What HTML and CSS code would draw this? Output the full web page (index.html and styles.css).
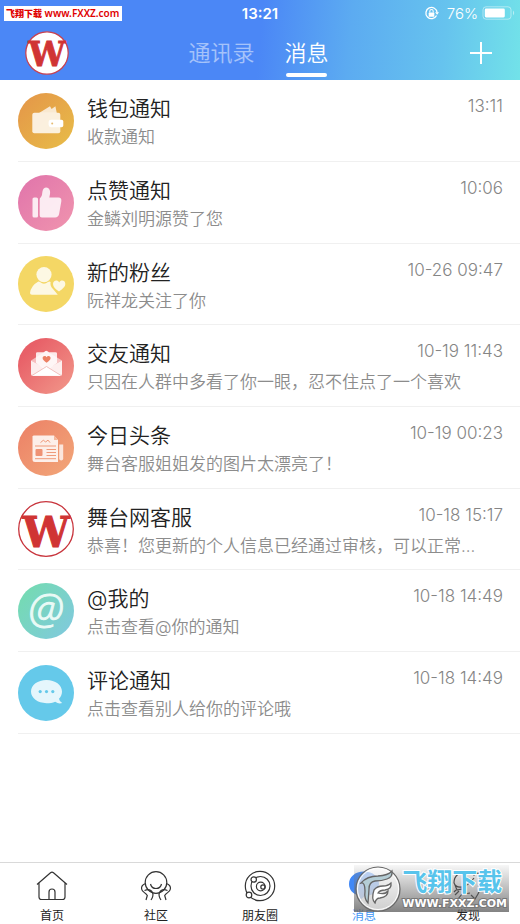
FILE: index.html
```html
<!DOCTYPE html>
<html lang="zh-CN">
<head>
<meta charset="utf-8">
<meta name="viewport" content="width=device-width, initial-scale=1">
<title>消息</title>
<link rel="stylesheet" href="styles.css">
</head>
<body>
<header class="header">
  <div class="status">
    <span class="status-left"><span class="site-tag"><b>飞翔下载</b> www.FXXZ.com</span></span>
    <time class="clock">13:21</time>
    <span class="status-right">
      <svg class="lock" viewBox="0 0 16 16" aria-hidden="true"><path d="M13.4 10.2A6 6 0 1 1 14 7" fill="none" stroke="#fff" stroke-width="1.4"/><path d="M11.8 6.6h4.2l-2 2.8z" fill="#fff"/><rect x="5" y="7" width="6" height="4.4" rx=".6" fill="#fff"/><path d="M6.2 7V5.6a1.8 1.8 0 0 1 3.6 0V7" fill="none" stroke="#fff" stroke-width="1.1"/></svg>
      <span>76%</span>
      <svg class="battery" viewBox="0 0 34 14" aria-hidden="true"><rect x="1" y=".8" width="28" height="12.4" rx="3" fill="none" stroke="#fff" stroke-opacity=".45"/><rect x="2.800" y="2.600" width="20" height="8.800" rx="1.300" fill="#fff"/><path d="M31 4.600q2.400 2.400 0 4.800z" fill="#fff" fill-opacity=".5"/></svg>
    </span>
  </div>
  <div class="nav">
    <a class="avatar" href="#me" aria-label="我"><svg viewBox="0 0 56 56" aria-hidden="true"><circle cx="28" cy="28" r="27" fill="#fff" stroke="#c8404f" stroke-width="1.600"/><text class="mark" x="28" y="45" text-anchor="middle">W</text></svg></a>
    <nav class="switch"><a href="#contacts">通讯录</a><a class="current" href="#messages">消息</a></nav>
    <button class="add" type="button" aria-label="添加"><svg viewBox="0 0 22 22" aria-hidden="true"><path d="M11 0v22M0 11h22" stroke="#fff" stroke-width="2"/></svg></button>
  </div>
</header>

<main class="content">
  <ul class="list">
    <li class="row">
      <svg class="icon" viewBox="0 0 56 56" aria-hidden="true"><defs><linearGradient id="g1" x1="0" y1="0" x2="1" y2="1"><stop stop-color="#e49549"/><stop offset="1" stop-color="#e8bd48"/></linearGradient></defs><circle cx="28" cy="28" r="28" fill="url(#g1)"/><path d="M21 20l11-6.700 1.600 2.700 3.800-2.700 1.400 6.700z" fill="#fff" fill-opacity=".75"/><rect x="14.300" y="19.700" width="28" height="20.500" rx="2" fill="#fff" fill-opacity=".82"/><path d="M33 26.700h10.500a1.800 1.800 0 0 1 1.800 1.800v3.900a1.800 1.800 0 0 1-1.800 1.800H33a2.400 2.400 0 0 1-2.400-2.400v-2.700a2.400 2.400 0 0 1 2.400-2.400z" fill="#fff"/><circle cx="34.200" cy="30.400" r="1" fill="#e6bb72"/></svg>
      <div class="text"><h2>钱包通知</h2><p>收款通知</p></div><time>13:11</time>
    </li>
    <li class="row">
      <svg class="icon" viewBox="0 0 56 56" aria-hidden="true"><defs><linearGradient id="g2" x1="0" y1="0" x2="1" y2="1"><stop stop-color="#e074ab"/><stop offset="1" stop-color="#f094ae"/></linearGradient></defs><circle cx="28" cy="28" r="28" fill="url(#g2)"/><g fill="#fff" fill-opacity=".84"><rect x="14.500" y="22.500" width="5.500" height="20" rx="1.600"/><path d="M21.700 24.500q0-1.500 1.100-2.300c1.500-1.500 1.200-3.500 1.700-6 .4-2.300 1.900-3.700 3.700-3.700 2.900 0 4.500 3 3.800 6.600l-.7 3.500h9q3.700 0 3 3.900l-2.200 12.600q-.7 3.400-4 3.400H23.800q-2.100 0-2.100-2.200z"/></g></svg>
      <div class="text"><h2>点赞通知</h2><p>金鳞刘明源赞了您</p></div><time>10:06</time>
    </li>
    <li class="row">
      <svg class="icon" viewBox="0 0 56 56" aria-hidden="true"><circle cx="28" cy="28" r="28" fill="#f4d765"/><g fill="#fff" fill-opacity=".82"><circle cx="26" cy="18.600" r="7.600"/><path d="M12 37q1-7.500 8-11.300 1-.5 2 .4 4 3.500 8 0 1.200-1 2.600-.2-.8 4 2.400 7.200l4.800 5.600H14q-2 0-2-1.700z"/><path d="M41 35.600c-3.500-2.700-6-4.600-6-7.600 0-3.800 4.600-4.800 6.200-1.500 1.600-3.300 6.100-2.300 6.100 1.300 0 3.200-2.800 5.100-6.300 7.800z"/></g></svg>
      <div class="text"><h2>新的粉丝</h2><p>阮祥龙关注了你</p></div><time>10-26 09:47</time>
    </li>
    <li class="row">
      <svg class="icon" viewBox="0 0 56 56" aria-hidden="true"><defs><linearGradient id="g4" x1="0" y1="0" x2="1" y2="1"><stop offset=".2" stop-color="#e86068"/><stop offset="1" stop-color="#f2998b"/></linearGradient></defs><circle cx="28" cy="28" r="28" fill="url(#g4)"/><path d="M13 22.500L28 13l16 9.500-16 9z" fill="#fff" fill-opacity=".55"/><path d="M18 15.500q0-1.300 1.300-1.300l6.700 0q2-3 5 0h6.500q1.500 0 1.500 1.300V25l-10.500 7.500L18 25z" fill="#fff" fill-opacity=".85"/><path d="M28.600 24.800c-2.500-1.800-4-3-4-4.700 0-2.300 3-2.900 4-.9 1-2 4-1.400 4 .9 0 1.700-1.500 2.900-4 4.700z" fill="#ec8064"/><path d="M13 22.500l15.500 8.500L44 22.500V36q0 2-2 2H15q-2 0-2-2z" fill="#fff" fill-opacity=".88"/><path d="M14 37.500l14.500-9 14.500 9" fill="#fff" stroke="#eeb3b0" stroke-width=".8"/></svg>
      <div class="text"><h2>交友通知</h2><p>只因在人群中多看了你一眼，忍不住点了一个喜欢</p></div><time>10-19 11:43</time>
    </li>
    <li class="row">
      <svg class="icon" viewBox="0 0 56 56" aria-hidden="true"><defs><linearGradient id="g5" x1="0" y1="0" x2="1" y2="1"><stop stop-color="#ec8066"/><stop offset="1" stop-color="#f2a779"/></linearGradient></defs><circle cx="28" cy="28" r="28" fill="url(#g5)"/><path d="M15.500 15.600H36l4 4.400v22H17q-2.500 0-2.500-2.500v-23z" fill="#fff" fill-opacity=".85"/><path d="M36 15.600l4 4.400h-4z" fill="#f5b79b"/><path d="M41.200 24.500h4v14a2 2 0 0 1-4 0z" fill="#fff" fill-opacity=".75"/><g fill="none" stroke="#ef9a7a" stroke-width="1"><path d="M17 26h21M28.500 29.500H38M28.500 32.500H38M28.500 35.500H38M17 38.700h21M22.500 22.600l3-2.500 2 2 2.500-2 2 2.500"/></g><rect x="17.500" y="29" width="7" height="7" rx="1" fill="#ef9274"/></svg>
      <div class="text"><h2>今日头条</h2><p>舞台客服姐姐发的图片太漂亮了！</p></div><time>10-19 00:23</time>
    </li>
    <li class="row">
      <svg class="icon" viewBox="0 0 56 56" aria-hidden="true"><circle cx="28" cy="28" r="27.300" fill="#fff" stroke="#c8343c" stroke-width="1.300"/><text class="mark" x="28" y="46" text-anchor="middle">W</text></svg>
      <div class="text"><h2>舞台网客服</h2><p>恭喜！您更新的个人信息已经通过审核，可以正常...</p></div><time>10-18 15:17</time>
    </li>
    <li class="row">
      <svg class="icon" viewBox="0 0 56 56" aria-hidden="true"><defs><linearGradient id="g7" x1="0" y1="0.100" x2="1" y2=".9"><stop offset=".1" stop-color="#75dab4"/><stop offset="1" stop-color="#80c9de"/></linearGradient></defs><circle cx="28" cy="28" r="28" fill="url(#g7)"/><text class="at" x="28" y="41" text-anchor="middle">@</text></svg>
      <div class="text"><h2>@我的</h2><p>点击查看@你的通知</p></div><time>10-18 14:49</time>
    </li>
    <li class="row">
      <svg class="icon" viewBox="0 0 56 56" aria-hidden="true"><circle cx="28" cy="28" r="28" fill="#65c9ea"/><path d="M28.500 15c8.800 0 15.500 5 15.500 11.600 0 2.900-1.100 5.300-3 7.200q.5 3.200 3.200 4.200-3.600 1.300-7-1.300c-2.500 1-5.300 1.500-8.700 1.500C19.700 38.200 13 33.200 13 26.600S19.700 15 28.500 15z" fill="#fff" fill-opacity=".83"/><g fill="#65c9ea"><circle cx="22.200" cy="26.600" r="1.600"/><circle cx="28.500" cy="26.600" r="1.600"/><circle cx="34.800" cy="26.600" r="1.600"/></g></svg>
      <div class="text"><h2>评论通知</h2><p>点击查看别人给你的评论哦</p></div><time>10-18 14:49</time>
    </li>
  </ul>
</main>

<footer class="footer">
  <nav class="tabs">
    <a href="#home"><svg viewBox="0 0 32 32" aria-hidden="true"><path d="M1 14.500L14.500 2.700q1.500-1.200 3 0L31 14.500M3 13v14q0 2.500 2.500 2.500h21q2.500 0 2.500-2.500V13M13 29.500V22q0-3 3-3t3 3v7.500"/></svg><span>首页</span></a>
    <a href="#community"><svg viewBox="0 0 32 32" aria-hidden="true"><circle cx="16" cy="12.500" r="10.800"/><path d="M10.500 14q1 4.500 5.500 4.500t5.500-4.500M5.800 13.500Q1 15 1.600 19c.4 3 4 3.600 5.700 6.500L6 30M4.500 20.500q6-2.500 8.200 2.500 1 3-1.700 7M26.200 13.500q4.800 1.500 4.200 5.500c-.4 3-4 3.600-5.700 6.500L26 30M27.500 20.500q-6-2.500-8.200 2.500-1 3 1.700 7"/></svg><span>社区</span></a>
    <a href="#moments"><svg viewBox="0 0 32 32" aria-hidden="true"><circle cx="16" cy="16" r="14.700"/><circle cx="16.500" cy="16" r="9.500"/><circle cx="16.700" cy="16.500" r="4.300"/><circle cx="19" cy="17" r="2.200"/><circle cx="9.700" cy="9.500" r="2.700" fill="#fff"/><circle cx="5" cy="25" r="2.800" fill="#fff"/></svg><span>朋友圈</span></a>
    <a class="active" href="#messages"><svg viewBox="0 0 32 32" aria-hidden="true"><path d="M16 1.500c9 0 15 5.500 15 12.500S25 26 17 26l-6 5v-5.500C5 24 1 20 1 14 1 7 7 1.500 16 1.500z" fill="#4188f6" stroke="none"/></svg><span>消息</span></a>
    <a href="#discover"><svg viewBox="0 0 32 32" aria-hidden="true"><path d="M2 13C2 5 8 2 14 2q5 0 8 3 4-3 6-1t-1 6q3 7-1 14l-3 5-4-4M2 13q2 5 8 4t12-9M3 15l2 5 5-1 2 5 6-1M7 21l-4 4M10 24l-4 5M4 20l-2 2"/></svg><span>发现</span></a>
  </nav>
  <div class="watermark">
    <svg viewBox="0 0 48 48" aria-hidden="true"><circle cx="24" cy="24" r="22" fill="#fff" fill-opacity=".6" stroke="#666" stroke-width="1.200"/><circle cx="24" cy="24" r="20.500" fill="none" stroke="#fff"/><g stroke="#666" stroke-width="1.300" fill="#b4cdd5"><path d="M7 18q6-7 17-7 10-.5 14-5 1 6-5 8-5 2-12 2-6 1-6 8l-1 14q-4-4-3-12 0-9-4-8z"/><path d="M20 25q3-4 9-4 5 0 8-3 1 6-6 7-5 0-7 3 7 2 10-2 0 6-8 7-4 0-5 5-4-4-1-13z" fill="#fff"/></g></svg>
    <div><strong>飞翔下载</strong><span>WWW.FXXZ.COM</span></div>
  </div>
</footer>
</body>
</html>
```
FILE: styles.css
```css
* { box-sizing: border-box; }

body {
  margin: 0;
  min-height: 100vh;
  display: flex;
  flex-direction: column;
  background: #fff;
  color: #222;
  font-family: Inter, "Noto Sans CJK SC", sans-serif;
  font-weight: 350;
}

a { color: inherit; text-decoration: none; }
svg { display: block; overflow: visible; }

.header {
  color: #fff;
  background: linear-gradient(95deg, #4b87f6 50%, #5cabf1 67%, #66c3ee 85%, #72e2e9);
}

.status {
  height: 26px;
  display: grid;
  grid-template-columns: 1fr auto 1fr;
  align-items: center;
  padding: 0 4px;
}

.site-tag {
  display: inline-block;
  padding: 0 3px 0 2px;
  background: #fff;
  color: #e00000;
  font: 600 10px/14px "Noto Sans", "Noto Sans CJK SC", sans-serif;
  white-space: nowrap;
}
.site-tag b { font-size: 9px; }

.status-left { display: flex; }
.clock { font-size: 15px; font-weight: 600; }
.status-right {
  display: flex;
  justify-content: flex-end;
  align-items: center;
  gap: 4px;
  font-size: 15px;
}
.lock { width: 15px; height: 15px; margin-right: 4px; }
.battery { width: 34px; height: 14px; }

.nav {
  height: 54px;
  display: grid;
  grid-template-columns: 1fr auto 1fr;
  align-items: center;
  padding: 0 28px 0 25px;
}
.avatar, .avatar svg { width: 44px; height: 44px; }

.switch { display: flex; gap: 30px; align-self: stretch; font-size: 22px; }
.switch a {
  display: flex;
  flex-direction: column;
  align-items: center;
  padding-top: 11px;
  line-height: 32px;
  opacity: .5;
}
.switch .current { opacity: 1; }
.current::after {
  content: "";
  width: 41px;
  height: 4px;
  margin-top: 4px;
  border-radius: 2px;
  background: #fff;
}

.add { justify-self: end; padding: 0; border: 0; background: none; }
.add svg { width: 22px; height: 22px; }

.mark {
  font: 700 42px "DejaVu Serif", serif;
  fill: #d03434;
  stroke: #d03434;
  stroke-width: 1px;
}
.at { font: italic 300 42px "Open Sans", sans-serif; fill: #eafaf6; stroke: #eafaf6; }

.content { flex: 1; }
.list {
  margin: 0;
  padding: 0 0 0 18px;
  list-style: none;
  display: grid;
  grid-auto-rows: minmax(82px, auto) minmax(82px, auto) minmax(81px, auto);
}
.row {
  display: grid;
  grid-template-columns: 56px minmax(0, 1fr) auto;
  column-gap: 13px;
  align-items: center;
  padding-right: 17px;
  border-bottom: 1px solid #f0f0f0;
}
.icon { width: 56px; height: 56px; grid-area: 1 / 1; }
.text { grid-area: 1 / 2 / 2 / 4; min-width: 0; padding-top: 3px; }
.row h2 { margin: 0; font-size: 21px; line-height: 30px; font-weight: 350; }
.row p {
  margin: 0;
  color: #8c8c8c;
  font-size: 17px;
  line-height: 26px;
  white-space: nowrap;
  overflow: hidden;
  text-overflow: ellipsis;
}
.row time {
  grid-area: 1 / 3;
  align-self: start;
  padding-top: 14px;
  color: #858585;
  font-size: 17px;
  line-height: 24px;
}

.footer { position: relative; border-top: 1px solid #d9d9d9; background: #fff; }
.tabs { display: grid; grid-template-columns: repeat(5, 1fr); }
.tabs a {
  display: flex;
  flex-direction: column;
  align-items: center;
  gap: 7px;
  padding: 7px 0 1px;
  font-size: 12px;
  font-weight: 400;
  line-height: 14px;
}
.tabs svg {
  width: 32px;
  height: 32px;
  fill: none;
  stroke: #333;
  stroke-width: 1.2px;
}
.tabs .active { color: #3e95f5; }

.watermark {
  position: absolute;
  top: 2px;
  right: 11px;
  display: flex;
  align-items: center;
  height: 47px;
  padding-right: 2px;
  background: linear-gradient(rgba(180, 180, 180, .1), rgba(100, 100, 100, .8));
  pointer-events: none;
}
.watermark svg { width: 48px; height: 48px; }
.watermark strong, .watermark span {
  display: block;
  paint-order: stroke fill;
  white-space: nowrap;
}
.watermark strong {
  color: #58c4ec;
  font-size: 25px;
  font-weight: 700;
  line-height: 30px;
  -webkit-text-stroke: 2px #fff;
}
.watermark span {
  color: #fff;
  font: 700 11px/14px "DejaVu Sans", sans-serif;
  -webkit-text-stroke: 2px #777;
}
```
